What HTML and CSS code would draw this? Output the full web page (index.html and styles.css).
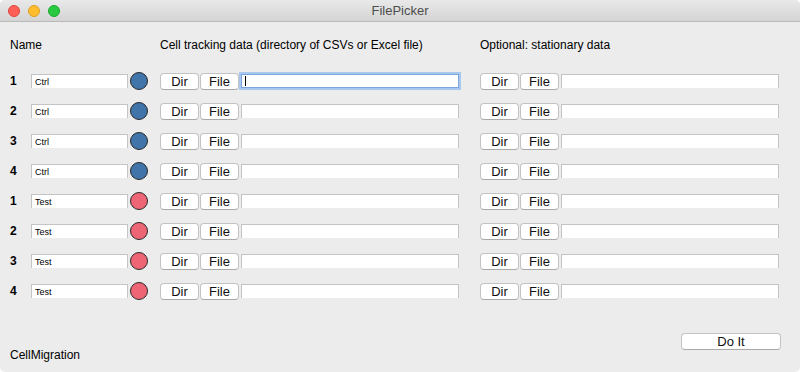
FILE: index.html
```html
<!DOCTYPE html>
<html lang="en">
<head>
    <meta charset="UTF-8">
    <meta name="viewport" content="width=device-width, initial-scale=1.0">
    <title>FilePicker</title>
    <link rel="stylesheet" href="styles.css">
</head>
<body>
    <div class="window">
        <div class="titlebar">
            <div class="lights">
                <span class="light red"></span>
                <span class="light yellow"></span>
                <span class="light green"></span>
            </div>
            <div class="title">FilePicker</div>
        </div>
        <div class="content">
            <div class="header">
                <div class="col-name">Name</div>
                <div class="col-track">Cell tracking data (directory of CSVs or Excel file)</div>
                <div class="col-stat">Optional: stationary data</div>
            </div>
            <div class="rows">
                <div class="row">
                    <div class="num">1</div>
                    <div class="name-entry">Ctrl</div>
                    <span class="dot blue"></span>
                    <div class="group first">
                        <button class="btn">Dir</button><button class="btn">File</button>
                        <div class="entry focused"><span class="cursor"></span></div>
                    </div>
                    <div class="group second">
                        <button class="btn">Dir</button><button class="btn">File</button>
                        <div class="entry"></div>
                    </div>
                </div>
                <div class="row">
                    <div class="num">2</div>
                    <div class="name-entry">Ctrl</div>
                    <span class="dot blue"></span>
                    <div class="group first">
                        <button class="btn">Dir</button><button class="btn">File</button>
                        <div class="entry"></div>
                    </div>
                    <div class="group second">
                        <button class="btn">Dir</button><button class="btn">File</button>
                        <div class="entry"></div>
                    </div>
                </div>
                <div class="row">
                    <div class="num">3</div>
                    <div class="name-entry">Ctrl</div>
                    <span class="dot blue"></span>
                    <div class="group first">
                        <button class="btn">Dir</button><button class="btn">File</button>
                        <div class="entry"></div>
                    </div>
                    <div class="group second">
                        <button class="btn">Dir</button><button class="btn">File</button>
                        <div class="entry"></div>
                    </div>
                </div>
                <div class="row">
                    <div class="num">4</div>
                    <div class="name-entry">Ctrl</div>
                    <span class="dot blue"></span>
                    <div class="group first">
                        <button class="btn">Dir</button><button class="btn">File</button>
                        <div class="entry"></div>
                    </div>
                    <div class="group second">
                        <button class="btn">Dir</button><button class="btn">File</button>
                        <div class="entry"></div>
                    </div>
                </div>
                <div class="row">
                    <div class="num">1</div>
                    <div class="name-entry">Test</div>
                    <span class="dot red"></span>
                    <div class="group first">
                        <button class="btn">Dir</button><button class="btn">File</button>
                        <div class="entry"></div>
                    </div>
                    <div class="group second">
                        <button class="btn">Dir</button><button class="btn">File</button>
                        <div class="entry"></div>
                    </div>
                </div>
                <div class="row">
                    <div class="num">2</div>
                    <div class="name-entry">Test</div>
                    <span class="dot red"></span>
                    <div class="group first">
                        <button class="btn">Dir</button><button class="btn">File</button>
                        <div class="entry"></div>
                    </div>
                    <div class="group second">
                        <button class="btn">Dir</button><button class="btn">File</button>
                        <div class="entry"></div>
                    </div>
                </div>
                <div class="row">
                    <div class="num">3</div>
                    <div class="name-entry">Test</div>
                    <span class="dot red"></span>
                    <div class="group first">
                        <button class="btn">Dir</button><button class="btn">File</button>
                        <div class="entry"></div>
                    </div>
                    <div class="group second">
                        <button class="btn">Dir</button><button class="btn">File</button>
                        <div class="entry"></div>
                    </div>
                </div>
                <div class="row">
                    <div class="num">4</div>
                    <div class="name-entry">Test</div>
                    <span class="dot red"></span>
                    <div class="group first">
                        <button class="btn">Dir</button><button class="btn">File</button>
                        <div class="entry"></div>
                    </div>
                    <div class="group second">
                        <button class="btn">Dir</button><button class="btn">File</button>
                        <div class="entry"></div>
                    </div>
                </div>
            </div>
            <div class="footer">
                <div class="app-name">CellMigration</div>
                <button class="btn do-it">Do It</button>
            </div>
        </div>
    </div>
</body>
</html>
```

FILE: styles.css
```css
body {
    margin: 0;
    padding: 0;
    background: #ffffff;
    font-family: "Liberation Sans", Arial, sans-serif;
    color: #000;
}
.window {
    width: 800px;
    height: 372px;
    background: #ececec;
    border-radius: 5px;
    overflow: hidden;
}
.titlebar {
    height: 22px;
    box-sizing: border-box;
    border-bottom: 1px solid #b9b9b9;
    background: linear-gradient(#e9e9e9, #d4d4d4);
    display: flex;
    align-items: center;
    position: relative;
}
.lights {
    display: flex;
    gap: 8px;
    padding-left: 8px;
}
.light {
    width: 12px;
    height: 12px;
    border-radius: 50%;
    box-sizing: border-box;
}
.light.red { background: #fe5f57; border: 1px solid #e0443e; }
.light.yellow { background: #febc2e; border: 1px solid #dea123; }
.light.green { background: #28c840; border: 1px solid #1aab29; }
.title {
    position: absolute;
    left: 0;
    right: 0;
    text-align: center;
    font-size: 13px;
    color: #4d4d4d;
    pointer-events: none;
}
.content {
    padding: 16px 0 0 10px;
}
.header {
    display: flex;
    font-size: 12px;
    line-height: 14px;
    height: 14px;
}
.col-name { width: 150px; }
.col-track { width: 320px; }
.rows {
    margin-top: 14px;
}
.row {
    display: flex;
    align-items: center;
    height: 30px;
}
.num {
    width: 21px;
    font-size: 12px;
    font-weight: bold;
}
.name-entry {
    width: 97px;
    height: 14px;
    box-sizing: border-box;
    background: #fff;
    border: 1px solid #c4c4c4;
    border-bottom: none;
    font-size: 9px;
    line-height: 14px;
    padding-left: 3px;
}
.dot {
    width: 18px;
    height: 18px;
    box-sizing: border-box;
    border-radius: 50%;
    border: 1px solid #2a2a2a;
    margin-left: 2px;
}
.dot.blue { background: #4174a9; }
.dot.red { background: #ee6676; }
.group {
    display: flex;
    align-items: center;
}
.group.first { margin-left: 12px; }
.group.second { margin-left: 21px; }
.btn {
    width: 39px;
    height: 17px;
    padding: 0;
    margin: 0;
    background: #fff;
    border: 1px solid #c3c3c3;
    border-bottom-color: #a9a9a9;
    border-radius: 4px;
    font-family: "Liberation Sans", Arial, sans-serif;
    font-size: 13px;
    line-height: 15px;
    color: #111;
}
.btn + .btn { margin-left: 1px; }
.entry {
    width: 218px;
    height: 14px;
    box-sizing: border-box;
    margin-left: 2px;
    background: #fff;
    border: 1px solid #c4c4c4;
    border-bottom: none;
    display: flex;
    align-items: center;
}
.entry.focused {
    border: 1px solid #7ea6de;
    box-shadow: 0 0 0 2px #a9c8ee;
}
.cursor {
    width: 1px;
    height: 10px;
    background: #000;
    margin-left: 3px;
}
.footer {
    display: flex;
    justify-content: space-between;
    height: 29px;
    margin-top: 27px;
    padding-right: 19px;
}
.app-name {
    align-self: flex-end;
    font-size: 12px;
    line-height: 14px;
}
.btn.do-it {
    width: 100px;
    align-self: flex-start;
}
```
